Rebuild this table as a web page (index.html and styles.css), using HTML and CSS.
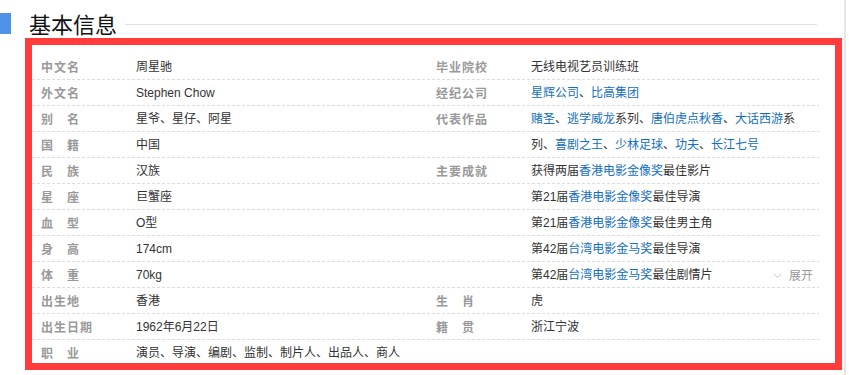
FILE: index.html
```html
<!DOCTYPE html>
<html lang="zh-CN">
<head>
<meta charset="utf-8">
<title>基本信息</title>
<link rel="stylesheet" href="styles.css">
</head>
<body>
<div class="page">
  <div class="title-bar">
    <span class="title-mark"></span>
    <h2 class="title">基本信息</h2>
    <span class="title-rule"></span>
  </div>
  <div class="info-box">
    <dl class="info-col">
      <div class="item"><dt class="name">中文名</dt><dd class="value">周星驰</dd></div>
      <div class="item"><dt class="name">外文名</dt><dd class="value">Stephen Chow</dd></div>
      <div class="item"><dt class="name">别　名</dt><dd class="value">星爷、星仔、阿星</dd></div>
      <div class="item"><dt class="name">国　籍</dt><dd class="value">中国</dd></div>
      <div class="item"><dt class="name">民　族</dt><dd class="value">汉族</dd></div>
      <div class="item"><dt class="name">星　座</dt><dd class="value">巨蟹座</dd></div>
      <div class="item"><dt class="name">血　型</dt><dd class="value">O型</dd></div>
      <div class="item"><dt class="name">身　高</dt><dd class="value">174cm</dd></div>
      <div class="item"><dt class="name">体　重</dt><dd class="value">70kg</dd></div>
      <div class="item"><dt class="name">出生地</dt><dd class="value">香港</dd></div>
      <div class="item"><dt class="name">出生日期</dt><dd class="value">1962年6月22日</dd></div>
      <div class="item"><dt class="name">职　业</dt><dd class="value">演员、导演、编剧、监制、制片人、出品人、商人</dd></div>
    </dl>
    <dl class="info-col info-col-right">
      <div class="item"><dt class="name">毕业院校</dt><dd class="value">无线电视艺员训练班</dd></div>
      <div class="item"><dt class="name">经纪公司</dt><dd class="value"><a class="link" href="#">星辉公司</a>、<a class="link" href="#">比高集团</a></dd></div>
      <div class="item"><dt class="name">代表作品</dt><dd class="value"><a class="link" href="#">赌圣</a>、<a class="link" href="#">逃学威龙</a>系列、<a class="link" href="#">唐伯虎点秋香</a>、<a class="link" href="#">大话西游</a>系列、<a class="link" href="#">喜剧之王</a>、<a class="link" href="#">少林足球</a>、<a class="link" href="#">功夫</a>、<a class="link" href="#">长江七号</a></dd></div>
      <div class="item"><dt class="name">主要成就</dt><dd class="value">
        <div class="line">获得两届<a class="link" href="#">香港电影金像奖</a>最佳影片</div>
        <div class="line">第21届<a class="link" href="#">香港电影金像奖</a>最佳导演</div>
        <div class="line">第21届<a class="link" href="#">香港电影金像奖</a>最佳男主角</div>
        <div class="line">第42届<a class="link" href="#">台湾电影金马奖</a>最佳导演</div>
        <div class="line">第42届<a class="link" href="#">台湾电影金马奖</a>最佳剧情片<a class="toggle" href="#"><svg class="chev" width="9" height="6" viewBox="0 0 9 6"><polyline points="0.5,0.8 4.5,4.5 8.5,0.8" fill="none" stroke="#c8c8c8" stroke-width="1"/></svg>展开</a></div>
      </dd></div>
      <div class="item"><dt class="name">生　肖</dt><dd class="value">虎</dd></div>
      <div class="item"><dt class="name">籍　贯</dt><dd class="value">浙江宁波</dd></div>
    </dl>
  </div>
</div>
</body>
</html>
```

FILE: styles.css
```css
html, body {
  margin: 0;
  padding: 0;
  background: #fff;
}

body {
  font-family: "Liberation Sans", "Noto Sans CJK SC", sans-serif;
  font-size: 12px;
  color: #333;
}

.page {
  width: 846px;
  height: 375px;
  border-right: 2px solid #e6e6e6;
  padding-top: 12px;
  box-sizing: border-box;
  overflow: hidden;
}

.title-bar {
  display: flex;
  align-items: center;
  height: 22px;
}

.title-mark {
  width: 11px;
  height: 21px;
  background: #4f91e8;
  margin-right: 18px;
}

.title {
  margin: 0;
  font-family: "Noto Sans CJK SC", sans-serif;
  font-weight: normal;
  font-size: 22px;
  line-height: 22px;
  color: #111;
}

.title-rule {
  flex: 1;
  height: 1px;
  background: #e2e2e2;
  margin: 2px 27px 0 8px;
}

.info-box {
  margin: 4px 0 0 25px;
  width: 817px;
  height: 332px;
  box-sizing: border-box;
  border: 7px solid #ff3b3b;
  padding-top: 9px;
  overflow: hidden;
  display: grid;
  grid-template-columns: 395px 392px;
  align-items: start;
}

.info-col {
  margin: 0;
  background-image: url("data:image/svg+xml,%3Csvg xmlns='http://www.w3.org/2000/svg' width='5' height='26'%3E%3Crect x='0' y='25' width='3' height='1' fill='%23dcdcdc'/%3E%3C/svg%3E");
  background-repeat: repeat;
  background-size: 5px 26px;
}

.item {
  display: flex;
  line-height: 26px;
}

.name {
  flex: none;
  width: 104px;
  box-sizing: border-box;
  padding-left: 9px;
  font-family: "Noto Sans CJK SC", sans-serif;
  font-weight: bold;
  color: #999;
  letter-spacing: 1px;
  white-space: nowrap;
}

.value {
  flex: 1;
  margin: 0;
  padding-right: 5px;
  font-family: "Liberation Sans", "Noto Sans CJK SC", sans-serif;
  color: #333;
  line-break: strict;
}

.link {
  color: #136ec2;
  text-decoration: none;
}

.toggle {
  float: right;
  color: #999;
  text-decoration: none;
  font-family: "Noto Sans CJK SC", sans-serif;
  margin-right: 1px;
}

.chev {
  margin-right: 7px;
  vertical-align: 1px;
}
```
